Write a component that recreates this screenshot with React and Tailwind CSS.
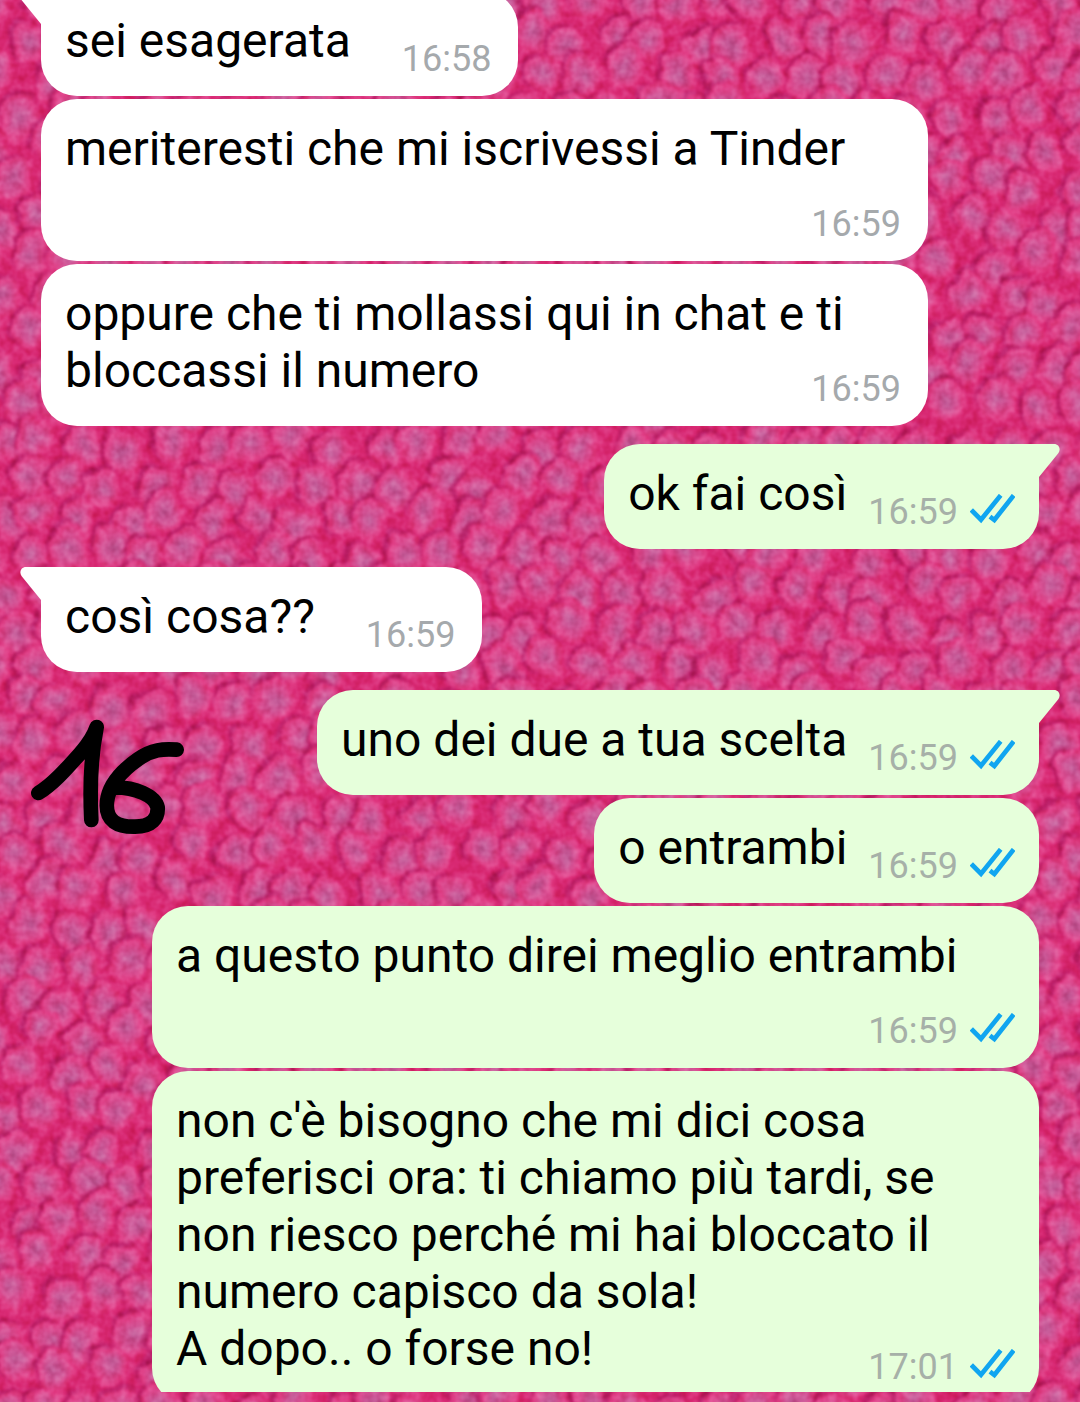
const messages = [
  { id: 1, text: "sei esagerata", time: "16:58", tail: true },
  { id: 2, text: "meriteresti che mi iscrivessi a Tinder", time: "16:59" },
  { id: 3, text: "oppure che ti mollassi qui in chat e ti bloccassi il numero", time: "16:59" },
  { id: 4, text: "ok fai così", time: "16:59", mine: true, tail: true },
  { id: 5, text: "così cosa??", time: "16:59", tail: true },
  { id: 6, text: "uno dei due a tua scelta", time: "16:59", mine: true, tail: true },
  { id: 7, text: "o entrambi", time: "16:59", mine: true },
  { id: 8, text: "a questo punto direi meglio entrambi", time: "16:59", mine: true },
  {
    id: 9,
    text: "non c'è bisogno che mi dici cosa preferisci ora: ti chiamo più tardi, se non riesco perché mi hai bloccato il numero capisco da sola!\nA dopo.. o forse no!",
    time: "17:01",
    mine: true,
  },
];

const COLS = 28;
const ROWS = 40;

// small seeded generator so the wallpaper is the same on every load
function makeRandom(seed) {
  let s = seed;
  return () => {
    s = (s * 16807) % 2147483647;
    return s / 2147483647;
  };
}

function makeBumps() {
  const rand = makeRandom(4177);
  const cells = Array.from({ length: COLS * ROWS }, () => ({
    dx: (rand() - 0.5) * 20,
    dy: (rand() - 0.5) * 20,
    rx: Math.round(14 + rand() * 4),
    ry: Math.round(16 + rand() * 5),
    turn: Math.round((rand() - 0.5) * 70),
  }));
  // one extra ring of cells on each side, so the tile repeats without a seam
  const bumps = [];
  for (let row = -1; row <= ROWS; row++) {
    for (let col = -1; col <= COLS; col++) {
      const c = cells[((row + ROWS) % ROWS) * COLS + ((col + COLS) % COLS)];
      bumps.push({
        ...c,
        x: Math.round(col * 42 + (row % 2 ? 21 : 0) + c.dx),
        y: Math.round(row * 37 + c.dy),
      });
    }
  }
  return bumps;
}

const bumps = makeBumps();

function Wallpaper() {
  return (
    <svg className="absolute inset-0 h-full w-full" aria-hidden="true">
      <defs>
        <radialGradient id="bump" cx="0.5" cy="0.5" r="0.5">
          <stop offset="0" stopColor="#c05c98" />
          <stop offset="0.35" stopColor="#cf5495" />
          <stop offset="0.65" stopColor="#dc488d" />
          <stop offset="0.84" stopColor="#e23d85" />
          <stop offset="1" stopColor="#dc2c78" stopOpacity="0" />
        </radialGradient>
        <radialGradient id="shade" cx="0.5" cy="0.5" r="0.5">
          <stop offset="0.6" stopColor="#a3155c" />
          <stop offset="0.8" stopColor="#ae175f" stopOpacity="0.8" />
          <stop offset="1" stopColor="#c81a68" stopOpacity="0" />
        </radialGradient>
        <filter id="rough" x="0" y="0" width="100%" height="100%" colorInterpolationFilters="sRGB">
          <feTurbulence type="fractalNoise" baseFrequency="0.045" numOctaves="2" seed="8" result="warp" />
          <feDisplacementMap in="SourceGraphic" in2="warp" scale="16" xChannelSelector="R" yChannelSelector="G" />
          <feGaussianBlur stdDeviation="1.6" result="cells" />
          <feTurbulence type="fractalNoise" baseFrequency="0.11" numOctaves="2" seed="3" />
          <feColorMatrix values="0.6 0 0 0 0.2  0.6 0 0 0 0.2  0.6 0 0 0 0.2  0 0 0 0 1" result="grain" />
          <feBlend in="grain" in2="cells" mode="soft-light" />
        </filter>
        <pattern id="fabric" width="1176" height="1480" patternUnits="userSpaceOnUse">
          <rect width="1176" height="1480" fill="#d82872" />
          {bumps.map((b, i) => (
            <g key={i} transform={`translate(${b.x} ${b.y}) rotate(${b.turn})`}>
              <ellipse cx="-3" cy="-2" rx={b.rx + 5} ry={b.ry + 5} fill="url(#shade)" />
              <ellipse cx="1" cy="1" rx={b.rx + 5} ry={b.ry + 5} fill="url(#bump)" />
            </g>
          ))}
        </pattern>
      </defs>
      <g filter="url(#rough)">
        <rect x="-20" y="-20" width="110%" height="110%" fill="url(#fabric)" />
      </g>
    </svg>
  );
}

function Ticks() {
  return (
    <svg className="h-[30px] w-[45px]" viewBox="360 160 135 90" fill="none" stroke="#10a5f0" strokeWidth="14" role="img" aria-label="Letto">
      <path d="M364 208 L393 237 L452 164" />
      <path d="M420 228 L433 238 L491 164" />
    </svg>
  );
}

function Tail({ mine }) {
  return (
    <svg
      className={mine ? "absolute top-0 -right-[21px] h-[34px] w-[22px] -scale-x-100" : "absolute top-0 -left-[21px] h-[34px] w-[22px]"}
      viewBox="0 0 22 34"
      fill={mine ? "#e6ffdb" : "#ffffff"}
      aria-hidden="true"
    >
      <path d="M22 0 H6 C1 0 -1 5 1.500 9 L21 33 H22 Z" />
    </svg>
  );
}

function Bubble({ text, time, mine, tail }) {
  const side = mine ? "bg-[#e6ffdb]" : "bg-white";
  const corner = !tail ? "" : mine ? "rounded-tr-none" : "rounded-tl-none";

  return (
    <div className={`relative max-w-[887px] rounded-[36px] px-6 pt-[21px] pb-[19px] ${side} ${corner}`}>
      {tail && <Tail mine={mine} />}
      <p className="flow-root text-[48px] leading-[57px] whitespace-pre-line text-black">
        {text}
        {/* floats beside the last line, or drops below it when there is no room */}
        <span className={`float-right mt-[29px] flex items-start gap-3 ${mine ? "ml-[21px]" : "ml-[51px] pr-[3px]"}`}>
          <time className={`text-[36px] leading-9 ${mine ? "text-[#a6b0a8]" : "text-[#a5a9ac]"}`}>{time}</time>
          {mine && <Ticks />}
        </span>
      </p>
    </div>
  );
}

function Scribble() {
  return (
    <svg
      className="absolute top-[718px] left-[30px] h-[117px] w-[155px]"
      viewBox="30 54 465 351"
      fill="none"
      stroke="#000000"
      strokeWidth="44"
      strokeLinecap="round"
      strokeLinejoin="round"
      role="img"
      aria-label="16"
    >
      <path d="M55 279 C100 252 145 200 185 155 C210 125 222 105 230 81 C212 170 209 262 214 360" />
      <path d="M470 149 C430 146 395 148 355 177 C305 212 266 256 261 305 C255 365 295 381 345 380 C395 380 415 355 413 322 C405 286 345 262 285 262" />
    </svg>
  );
}

export default function App() {
  return (
    <main className="relative overflow-hidden bg-[#d82872] pb-[10px] font-[Roboto,sans-serif]">
      <Wallpaper />
      <ul className="relative flex flex-col overflow-hidden px-[41px]">
        {messages.map((m, i) => {
          const gap = i === 0 ? "-mt-[9px]" : m.tail ? "mt-[18px]" : "mt-[3px]";
          return (
            <li key={m.id} className={`flex last:-mb-3 ${gap} ${m.mine ? "justify-end" : "justify-start"}`}>
              <Bubble {...m} />
            </li>
          );
        })}
      </ul>
      <Scribble />
    </main>
  );
}
